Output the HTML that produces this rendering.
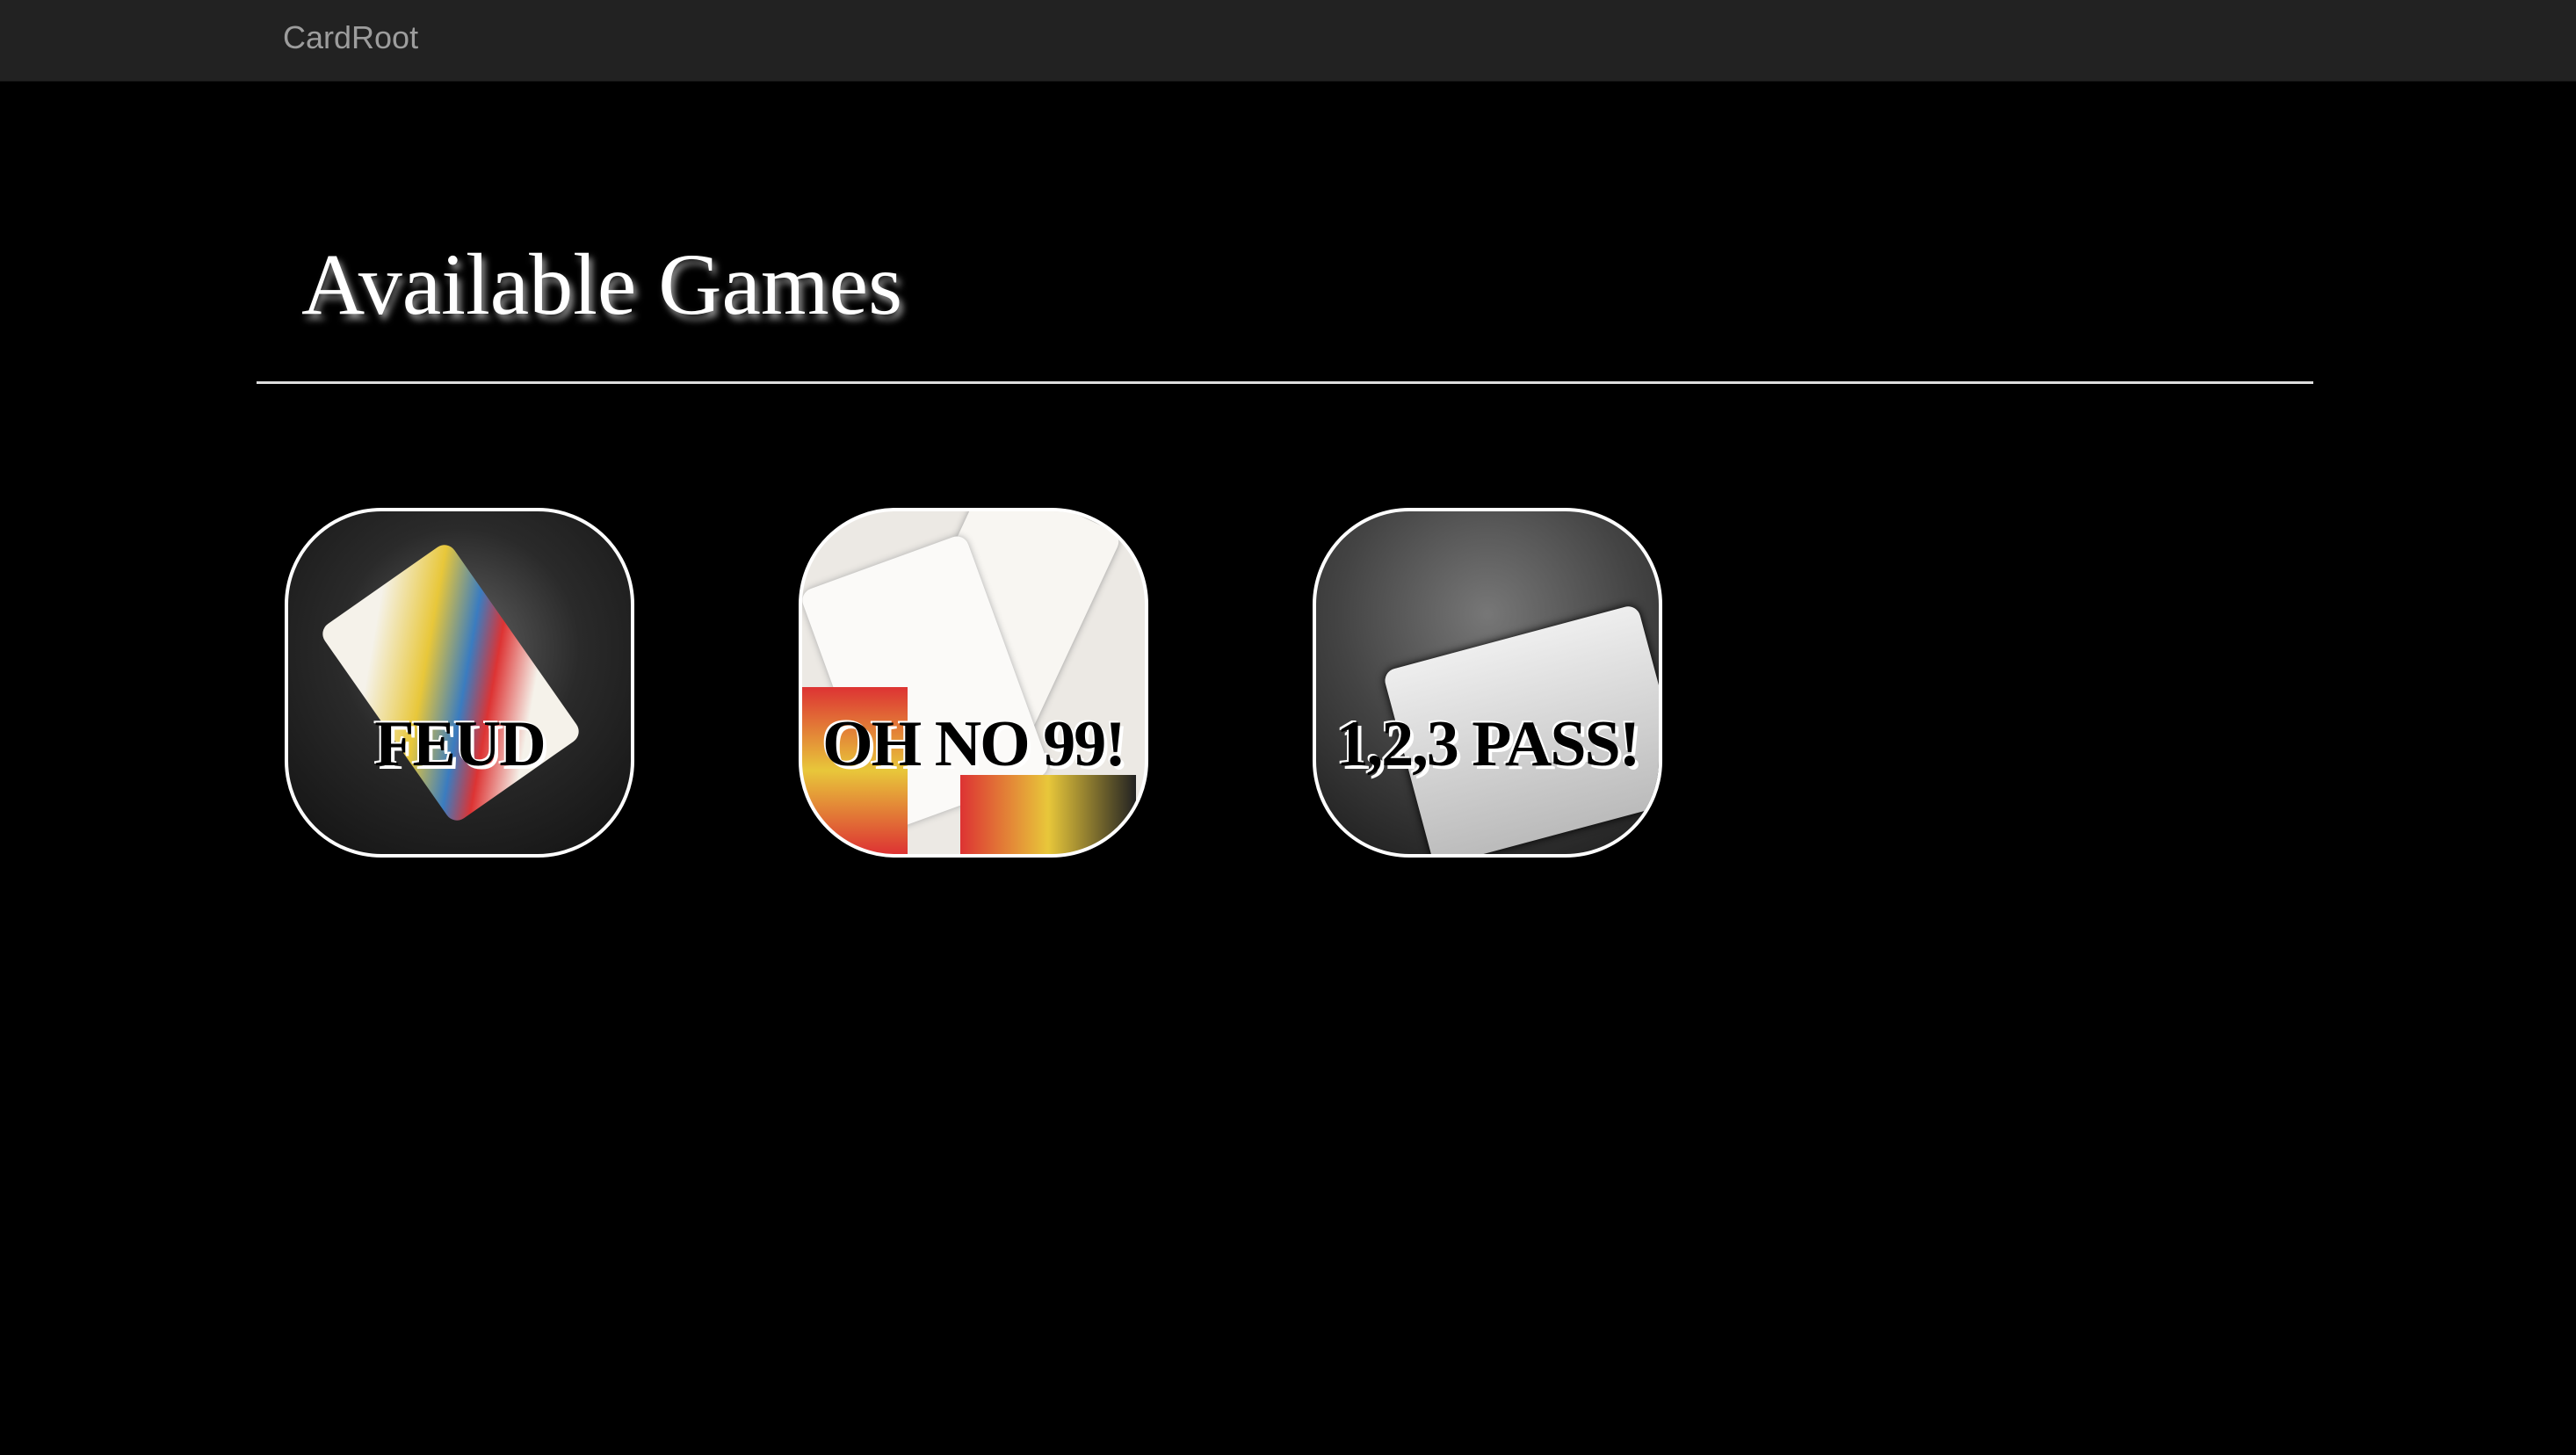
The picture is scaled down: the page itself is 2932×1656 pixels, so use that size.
<!DOCTYPE html>
<html><head><meta charset="utf-8"><style>
html,body{margin:0;padding:0;width:2932px;height:1656px;background:#000;overflow:hidden}
.nav{position:absolute;left:0;top:0;width:2932px;height:92px;background:#222;border-bottom:1px solid #111}
.brand{position:absolute;left:322px;top:22px;font:36px "Liberation Sans",sans-serif;color:#9d9d9d}
h1{position:absolute;left:343px;top:266px;margin:0;font:100px "Liberation Serif",serif;color:#fff;text-shadow:4px 6px 8px rgba(255,255,255,.6);white-space:nowrap}
.hr{position:absolute;left:292px;top:434px;width:2341px;height:3px;background:#ddd}
.tile{position:absolute;top:578px;width:390px;height:390px;border:4px solid #fff;border-radius:110px;overflow:hidden}
.lbl{position:absolute;left:-20px;right:-20px;top:223px;text-align:center;font:bold 74px "Liberation Serif",serif;color:#000;text-shadow:4px 4px 0 #fff,-2px -2px 0 #fff;white-space:nowrap;letter-spacing:-2px}
.card{position:absolute;background:#f4f2ee;border-radius:14px}
</style></head><body>
<div class="nav"><div class="brand">CardRoot</div></div>
<h1>Available Games</h1>
<div class="hr"></div>

<div class="tile" style="left:324px;background:radial-gradient(circle at 50% 40%,#666 0%,#2a2a2a 45%,#111 100%)">
 <div class="card" style="left:95px;top:60px;width:180px;height:270px;transform:rotate(-35deg);background:linear-gradient(135deg,#f5f2ea 20%,#e8c73a 40%,#3a7cc0 55%,#d33 65%,#f5f2ea 80%)"></div>
 <div class="lbl">FEUD</div>
</div>

<div class="tile" style="left:909px;background:#ece9e4">
 <div class="card" style="left:150px;top:-20px;width:170px;height:250px;transform:rotate(25deg);background:#f8f6f2;box-shadow:0 0 8px #999"></div>
 <div class="card" style="left:40px;top:50px;width:200px;height:290px;transform:rotate(-20deg);background:#fbfaf8;box-shadow:0 0 8px #aaa"></div>
 <div style="position:absolute;left:0;top:200px;width:120px;height:190px;background:linear-gradient(#d33,#e8c73a,#d33)"></div>
 <div style="position:absolute;left:180px;top:300px;width:200px;height:100px;background:linear-gradient(90deg,#d33,#e8c73a,#222)"></div>
 <div class="lbl">OH NO 99!</div>
</div>

<div class="tile" style="left:1494px;background:radial-gradient(circle at 50% 30%,#777 0%,#444 50%,#1c1c1c 100%)">
 <div class="card" style="left:100px;top:140px;width:300px;height:230px;transform:rotate(-15deg);background:linear-gradient(#eee,#bbb);box-shadow:0 0 10px #000"></div>
 <div class="lbl">1,2,3 PASS!</div>
</div>
</body></html>
